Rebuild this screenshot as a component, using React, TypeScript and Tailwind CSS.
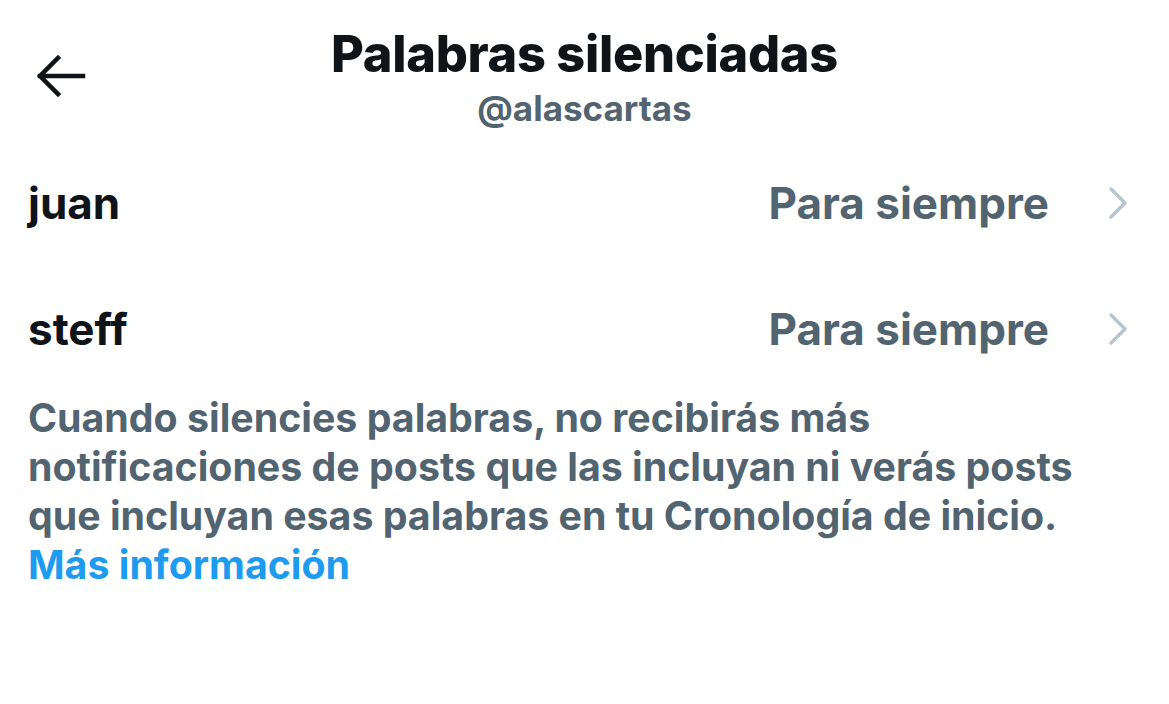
const words = [
  { word: 'juan', duration: 'Para siempre' },
  { word: 'steff', duration: 'Para siempre' },
]

export default function App() {
  return (
    <div className="w-[1169px] h-[704px] bg-white overflow-hidden" style={{ fontFamily: 'Inter, "Noto Sans", sans-serif' }}>
      <header className="relative flex flex-col items-center pt-[24px]">
        <button className="absolute left-[34px] top-[52px] text-[#0f1419]">
          <svg width="52" height="48" viewBox="0 0 52 48" fill="none" stroke="currentColor" strokeWidth="4.5" strokeLinecap="square">
            <path d="M6 24H49M24 6 6 24l18 18" />
          </svg>
        </button>
        <h1 className="text-[50.5px] leading-[60px] font-extrabold text-[#0f1419] tracking-[-0.3px]">Palabras silenciadas</h1>
        <p className="mt-[2px] text-[35px] leading-[44px] font-bold text-[#536471]">@alascartas</p>
      </header>

      <ul className="mt-[10px]">
        {words.map(w => (
          <li key={w.word} className="flex items-center h-[126px] pl-[28px] pr-[39px]">
            <span className="flex-1 text-[44px] font-bold text-[#0f1419]">{w.word}</span>
            <span className="text-[44px] font-bold text-[#536471]">{w.duration}</span>
            <svg className="ml-[57px]" width="24" height="36" viewBox="0 0 24 36" fill="none" stroke="#b6c5cf" strokeWidth="3.5" strokeLinecap="round" strokeLinejoin="round">
              <path d="M5 4 19 18 5 32" />
            </svg>
          </li>
        ))}
      </ul>

      <p className="px-[28px] mt-[1px] text-[39.3px] leading-[49px] font-bold text-[#536471]">
        Cuando silencies palabras, no recibirás más<br />
        notificaciones de posts que las incluyan ni verás posts<br />
        que incluyan esas palabras en tu Cronología de inicio.<br />
        <a className="text-[#1d9bf0]">Más información</a>
      </p>
    </div>
  )
}
